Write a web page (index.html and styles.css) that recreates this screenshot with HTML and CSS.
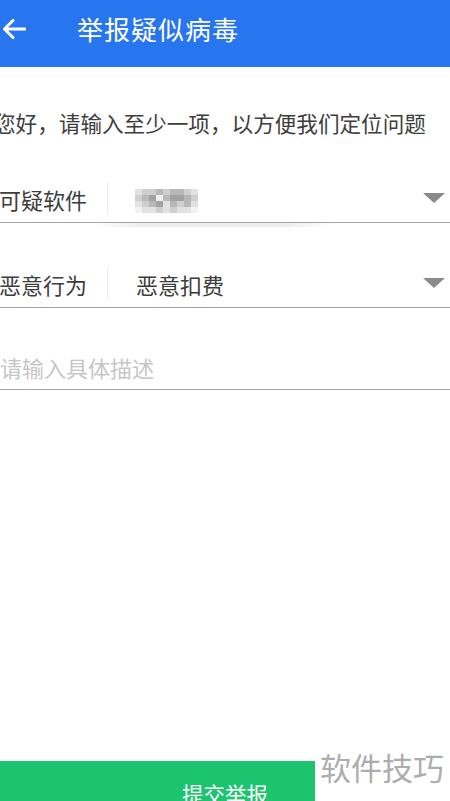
FILE: index.html
```html
<!DOCTYPE html>
<html lang="zh-CN">
<head>
  <meta charset="UTF-8" />
  <title>举报疑似病毒</title>
  <link rel="stylesheet" href="styles.css">
</head>
<body>
  <div class="page">
    <div class="top-bar">
      <svg class="back-icon" width="24" height="20" viewBox="0 0 24 20">
        <path d="M11 1.5 L2.5 10 L11 18.5 M2.5 10 H23" fill="none" stroke="#fff" stroke-width="3" stroke-linecap="round" stroke-linejoin="round"/>
      </svg>
      <h1>举报疑似病毒</h1>
    </div>

    <div class="report-form">
      <p class="intro">您好，请输入至少一项，以方便我们定位问题</p>

      <div class="form-row row-app">
        <span class="row-label">可疑软件</span>
        <span class="row-sep"></span>
        <div class="mosaic">
          <i class="g1"></i><i class="g2"></i><i class="g2"></i><i class="g3"></i><i class="g2"></i><i class="g3"></i><i class="g3"></i><i class="g2"></i><i class="g1"></i>
          <i class="g2"></i><i class="g3"></i><i class="g4"></i><i class="g5"></i><i class="g3"></i><i class="g4"></i><i class="g4"></i><i class="g3"></i><i class="g2"></i>
          <i class="g1"></i><i class="g2"></i><i class="g3"></i><i class="g4"></i><i class="g1"></i><i class="g3"></i><i class="g2"></i><i class="g3"></i><i class="g1"></i>
          <i class="g0"></i><i class="g1"></i><i class="g1"></i><i class="g2"></i><i class="g1"></i><i class="g2"></i><i class="g1"></i><i class="g1"></i><i class="g0"></i>
        </div>
        <span class="caret"></span>
      </div>

      <div class="form-row">
        <span class="row-label">恶意行为</span>
        <span class="row-sep"></span>
        <span class="row-value">恶意扣费</span>
        <span class="caret"></span>
      </div>

      <div class="form-row row-desc">
        <span class="placeholder">请输入具体描述</span>
      </div>
    </div>

    <button class="submit-btn">提交举报</button>
    <div class="watermark">软件技巧</div>
  </div>
</body>
</html>
```

FILE: styles.css
```css
html, body {
  margin: 0;
  padding: 0;
  overflow: hidden;
  background: #fff;
}

body {
  font-family: "Noto Sans CJK SC", "Noto Sans", sans-serif;
  color: #3a3a3a;
}

.page {
  position: relative;
  height: 825px;
  display: flex;
  flex-direction: column;
}

.top-bar {
  height: 67px;
  background-color: #2775ef;
  display: flex;
  align-items: center;
  flex-shrink: 0;
}

.back-icon {
  margin-left: 2px;
  margin-top: -10px;
}

.top-bar h1 {
  margin: -10px 0 0 51px;
  font-size: 26px;
  font-weight: normal;
  color: #fff;
  line-height: 30px;
  letter-spacing: 1px;
}

.report-form {
  margin-left: -1px;
}

.intro {
  margin: 41px 0 0 -5px;
  font-size: 21.6px;
  line-height: 30px;
  height: 30px;
  white-space: nowrap;
  color: #3d3d3d;
}

.form-row {
  position: relative;
  height: 85px;
  display: flex;
  align-items: flex-end;
  padding-bottom: 8px;
  box-sizing: border-box;
  border-bottom: 1px solid #a4a4a4;
  font-size: 22px;
  line-height: 30px;
}

.row-label {
  width: 89px;
  color: #3d3d3d;
}

.row-sep {
  width: 1px;
  height: 32px;
  margin: 0 28px 0 19px;
  background: #ebebeb;
  align-self: flex-end;
}

.row-value {
  color: #3d3d3d;
}

.mosaic {
  display: grid;
  grid-template-columns: repeat(9, 7px);
  grid-template-rows: repeat(4, 6px);
  margin: 0 0 1px -1px;
}

.mosaic i { display: block; }
.g0 { background: #f2f2f2; }
.g1 { background: #e2e2e2; }
.g2 { background: #cfcfcf; }
.g3 { background: #b8b8b8; }
.g4 { background: #a2a2a2; }
.g5 { background: #f0f0f0; }

/* smudge under the blurred app name */
.row-app::after {
  content: "";
  position: absolute;
  left: 95px;
  top: 85px;
  width: 240px;
  height: 4px;
  background: linear-gradient(to right, rgba(235,235,235,0), #eeeeee 20%, #eeeeee 80%, rgba(235,235,235,0));
}

.caret {
  margin: 0 5px 11px auto;
  width: 0;
  height: 0;
  border-left: 11px solid transparent;
  border-right: 11px solid transparent;
  border-top: 10px solid #8a8a8a;
}

.row-desc {
  height: 82px;
  padding-bottom: 7px;
}

.placeholder {
  margin-left: 1px;
  color: #c6c6c6;
}

.submit-btn {
  margin-top: auto;
  height: 64px;
  width: 100%;
  border: none;
  background-color: #1dc46f;
  color: #fff;
  font-family: inherit;
  font-size: 21.5px;
  flex-shrink: 0;
  padding: 0;
}

.watermark {
  position: absolute;
  left: 315px;
  top: 751px;
  width: 135px;
  height: 74px;
  padding-left: 5px;
  box-sizing: border-box;
  background: #fff;
  color: #adadad;
  font-size: 31px;
  line-height: 32px;
  white-space: nowrap;
}
```
